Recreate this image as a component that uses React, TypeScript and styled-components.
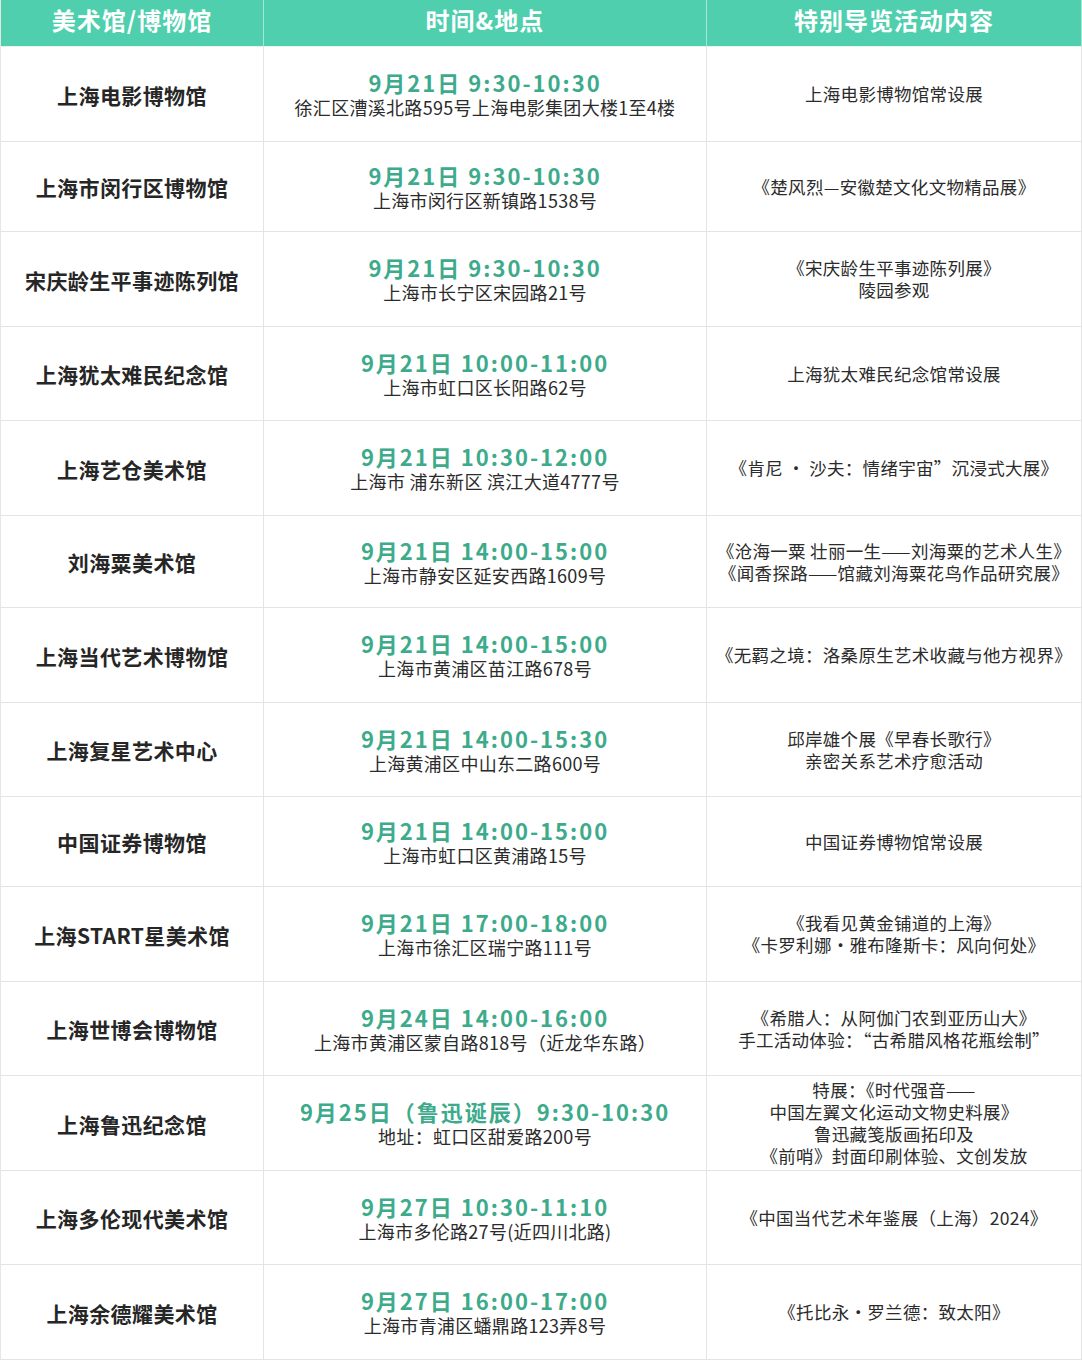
import React from "react";
import styled, { createGlobalStyle } from "styled-components";

type Row = {
  name: string;
  time: string;
  place: string;
  show: string[];
  h: number;
};

const rows: Row[] = [
  { name: "上海电影博物馆", time: "9月21日 9:30-10:30", place: "徐汇区漕溪北路595号上海电影集团大楼1至4楼", show: ["上海电影博物馆常设展"], h: 95 },
  { name: "上海市闵行区博物馆", time: "9月21日 9:30-10:30", place: "上海市闵行区新镇路1538号", show: ["《楚风烈—安徽楚文化文物精品展》"], h: 90 },
  { name: "宋庆龄生平事迹陈列馆", time: "9月21日 9:30-10:30", place: "上海市长宁区宋园路21号", show: ["《宋庆龄生平事迹陈列展》", "陵园参观"], h: 95 },
  { name: "上海犹太难民纪念馆", time: "9月21日 10:00-11:00", place: "上海市虹口区长阳路62号", show: ["上海犹太难民纪念馆常设展"], h: 94 },
  { name: "上海艺仓美术馆", time: "9月21日 10:30-12:00", place: "上海市 浦东新区 滨江大道4777号", show: ["《肯尼 · 沙夫：情绪宇宙”沉浸式大展》"], h: 95 },
  { name: "刘海粟美术馆", time: "9月21日 14:00-15:00", place: "上海市静安区延安西路1609号", show: ["《沧海一粟 壮丽一生——刘海粟的艺术人生》", "《闻香探路——馆藏刘海粟花鸟作品研究展》"], h: 92 },
  { name: "上海当代艺术博物馆", time: "9月21日 14:00-15:00", place: "上海市黄浦区苗江路678号", show: ["《无羁之境：洛桑原生艺术收藏与他方视界》"], h: 95 },
  { name: "上海复星艺术中心", time: "9月21日 14:00-15:30", place: "上海黄浦区中山东二路600号", show: ["邱岸雄个展《早春长歌行》", "亲密关系艺术疗愈活动"], h: 94 },
  { name: "中国证券博物馆", time: "9月21日 14:00-15:00", place: "上海市虹口区黄浦路15号", show: ["中国证券博物馆常设展"], h: 90 },
  { name: "上海START星美术馆", time: "9月21日 17:00-18:00", place: "上海市徐汇区瑞宁路111号", show: ["《我看见黄金铺道的上海》", "《卡罗利娜·雅布隆斯卡：风向何处》"], h: 95 },
  { name: "上海世博会博物馆", time: "9月24日 14:00-16:00", place: "上海市黄浦区蒙自路818号（近龙华东路）", show: ["《希腊人：从阿伽门农到亚历山大》", "手工活动体验：“古希腊风格花瓶绘制”"], h: 94 },
  { name: "上海鲁迅纪念馆", time: "9月25日（鲁迅诞辰）9:30-10:30", place: "地址：虹口区甜爱路200号", show: ["特展：《时代强音——", "中国左翼文化运动文物史料展》", "鲁迅藏笺版画拓印及", "《前哨》封面印刷体验、文创发放"], h: 95 },
  { name: "上海多伦现代美术馆", time: "9月27日 10:30-11:10", place: "上海市多伦路27号(近四川北路)", show: ["《中国当代艺术年鉴展（上海）2024》"], h: 94 },
  { name: "上海余德耀美术馆", time: "9月27日 16:00-17:00", place: "上海市青浦区蟠鼎路123弄8号", show: ["《托比永·罗兰德：致太阳》"], h: 95 },
];

const GlobalStyle = createGlobalStyle`
  body {
    margin: 0;
    background: #ffffff;
    font-family: "Noto Sans CJK SC", "Noto Sans", sans-serif;
  }
`;

const Table = styled.div`
  width: 1081px;
  display: grid;
  grid-template-columns: 263px 443px 375px;
  border-left: 1px solid #e6e6e6;
`;

const Head = styled.div`
  height: 47px;
  box-sizing: border-box;
  padding-bottom: 8px;
  display: flex;
  align-items: center;
  justify-content: center;
  background: #4fcfae;
  color: #ffffff;
  font-size: 24px;
  font-weight: 700;
  letter-spacing: 1px;
  border-right: 1px solid #a6e6d4;
  border-bottom: 1px solid #e6f4ef;
`;

const Cell = styled.div<{ $h: number }>`
  height: ${(p) => p.$h - 1}px;
  display: flex;
  flex-direction: column;
  align-items: center;
  justify-content: center;
  text-align: center;
  border-right: 1px solid #e4e4e4;
  border-bottom: 1px solid #e4e4e4;
`;

const Name = styled.div`
  font-size: 21px;
  font-weight: 700;
  color: #262626;
  letter-spacing: 0.4px;
  line-height: 30px;
  margin-top: 1px;
`;

const Time = styled.div`
  font-size: 22px;
  font-weight: 700;
  color: #3dab8b;
  letter-spacing: 2px;
  line-height: 26px;
`;

const Place = styled.div`
  font-size: 18px;
  color: #2b2b2b;
  letter-spacing: 0.3px;
  line-height: 24px;
`;

const Show = styled.div`
  font-size: 17.5px;
  color: #2b2b2b;
  letter-spacing: 0.3px;
  line-height: 22px;
`;

export default function App() {
  return (
    <>
      <GlobalStyle />
      <Table>
        <Head>美术馆/博物馆</Head>
        <Head>时间&amp;地点</Head>
        <Head>特别导览活动内容</Head>
        {rows.map((r) => (
          <React.Fragment key={r.name}>
            <Cell $h={r.h}>
              <Name>{r.name}</Name>
            </Cell>
            <Cell $h={r.h}>
              <Time>{r.time}</Time>
              <Place>{r.place}</Place>
            </Cell>
            <Cell $h={r.h}>
              {r.show.map((s) => (
                <Show key={s}>{s}</Show>
              ))}
            </Cell>
          </React.Fragment>
        ))}
      </Table>
    </>
  );
}
